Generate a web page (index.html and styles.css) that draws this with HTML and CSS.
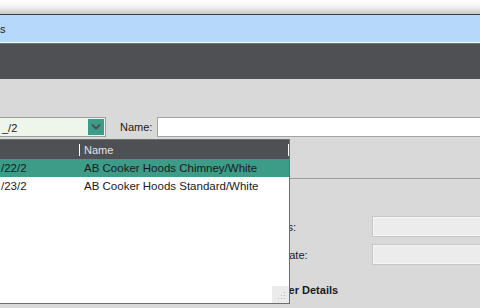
FILE: index.html
```html
<!DOCTYPE html>
<html lang="en">
<head>
    <meta charset="UTF-8">
    <title>Products</title>
    <link rel="stylesheet" href="styles.css">
</head>
<body>
    <div class="titlebar"></div>
    <div class="tabband"><span class="tab-title">s</span></div>
    <div class="toolbar"></div>

    <div id="content">
        <div class="filter">
            <div class="combo">
                <span class="combo-text">_/2</span>
                <span class="combo-button">
                    <svg width="10" height="6" viewBox="0 0 10 6"><path d="M1 0.5 L5 4.5 L9 0.5" fill="none" stroke="#4f5054" stroke-width="2"/></svg>
                </span>
            </div>
            <label class="filter-label">Name:</label>
            <input class="name-box" type="text">
        </div>

        <div class="tabstrip"></div>

        <div class="details">
            <div class="field">
                <span class="field-label">Colours:</span>
                <input class="field-box" type="text">
            </div>
            <div class="field">
                <span class="field-label">Start Date:</span>
                <input class="field-box" type="text">
            </div>
            <h3 class="section">Supplier Details</h3>
        </div>
    </div>

    <div class="popup">
        <div class="popup-row popup-head">
            <div class="cell"></div>
            <div class="cell"><span class="sep"></span><span class="head-text">Name</span></div>
            <span class="sep sep-end"></span>
        </div>
        <div class="popup-row selected">
            <div class="cell">/22/2</div>
            <div class="cell name-cell">AB Cooker Hoods Chimney/White</div>
        </div>
        <div class="popup-row">
            <div class="cell">/23/2</div>
            <div class="cell name-cell">AB Cooker Hoods Standard/White</div>
        </div>
        <div class="grip">
            <svg width="10" height="10" viewBox="0 0 10 10" fill="#b4b4b4">
                <rect x="7" y="1" width="1" height="1"/>
                <rect x="4" y="4" width="1" height="1"/><rect x="7" y="4" width="1" height="1"/>
                <rect x="1" y="7" width="1" height="1"/><rect x="4" y="7" width="1" height="1"/><rect x="7" y="7" width="1" height="1"/>
            </svg>
        </div>
    </div>
</body>
</html>
```

FILE: styles.css
```css
* {
    box-sizing: border-box;
    margin: 0;
    padding: 0;
    font-family: inherit;
    font-size: inherit;
}

body {
    width: 480px;
    height: 308px;
    overflow: hidden;
    position: relative;
    background-color: #d9d9d9;
    color: #1a1a1a;
    font-family: "Liberation Sans", Arial, sans-serif;
    font-size: 11px;
}

.titlebar {
    height: 15px;
    background: linear-gradient(#ffffff 0%, #f4f4f4 45%, #c9c9c9 100%);
    border-bottom: 1px solid #3b3d42;
}

.tabband {
    height: 28px;
    background-color: #b6d9fb;
    border-bottom: 1px solid #f4f9ff;
    display: flex;
    align-items: center;
    padding-top: 1px;
    overflow: hidden;
}

.tab-title {
    color: #202020;
}

.toolbar {
    height: 36px;
    background-color: #4f5054;
    border-top: 1px solid #68717d;
}

#content {
    padding-top: 38px;
}

.filter {
    display: flex;
    align-items: center;
    height: 20px;
}

.combo {
    margin-left: -20px;
    width: 126px;
    height: 20px;
    border: 1px solid #9c9c9c;
    background-color: #eef5ea;
    display: flex;
    align-items: center;
    justify-content: space-between;
    padding: 1px;
}

.combo-text {
    padding-left: 20px;
    padding-top: 2px;
}

.combo-button {
    width: 16px;
    height: 16px;
    background-color: #3d9c88;
    display: flex;
    align-items: center;
    justify-content: center;
}

.filter-label {
    margin-left: 14px;
    width: 37px;
}

.name-box {
    flex: 1;
    min-width: 0;
    height: 20px;
    margin-right: -4px;
    border: 1px solid #a3a3a3;
    background-color: #ffffff;
}

.tabstrip {
    height: 42px;
    border-bottom: 1px solid #9d9d9d;
}

.details {
    padding-left: 255px;
    padding-top: 37px;
}

.field {
    display: flex;
    align-items: center;
    height: 21px;
    margin-bottom: 7px;
}

.field-label {
    flex: 0 0 117px;
}

.field-box {
    flex: 1;
    min-width: 0;
    height: 21px;
    margin-right: -4px;
    border: 1px solid #c6c6c6;
    box-shadow: inset 0 0 0 1px #f6f6f6;
    background-color: #ececec;
}

.section {
    font-weight: bold;
    padding-top: 12px;
}

/* dropdown list over the form */
.popup {
    position: absolute;
    left: -1px;
    top: 139px;
    width: 291px;
    height: 165px;
    border: 1px solid #6e6e6e;
    background-color: #ffffff;
}

.popup-row {
    display: grid;
    grid-template-columns: 79px 1fr;
    height: 18px;
    align-items: center;
    font-size: 11.5px;
}

.popup-head {
    height: 19px;
    background-color: #4f5054;
    color: #e4e4e4;
    position: relative;
    font-size: 11px;
}

.cell {
    display: flex;
    align-items: center;
    white-space: nowrap;
    padding-left: 1px;
}

.name-cell {
    padding-left: 5px;
}

.popup-head .cell {
    padding-left: 0;
}

.sep {
    display: inline-block;
    width: 1px;
    height: 12px;
    background-color: #ffffff;
}

.head-text {
    padding-left: 4px;
}

.sep-end {
    position: absolute;
    right: 0;
    top: 4px;
}

.selected {
    background-color: #3d9c88;
}

.grip {
    position: absolute;
    right: 0;
    bottom: 0;
    width: 17px;
    height: 17px;
    background-color: #ebebeb;
    display: flex;
    align-items: flex-end;
    justify-content: flex-end;
    padding: 0 2px 2px 0;
}
```
